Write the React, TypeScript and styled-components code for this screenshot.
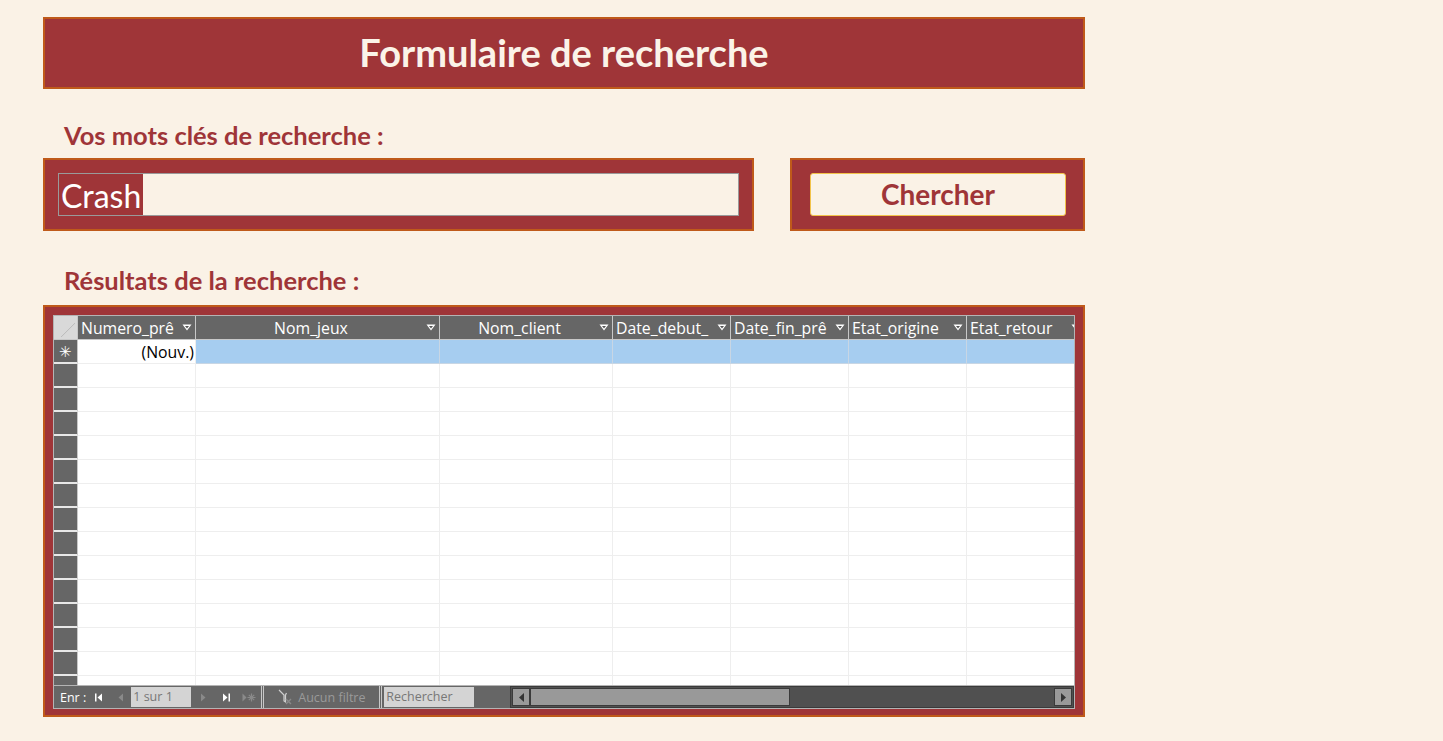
import React from 'react';
import styled, { createGlobalStyle } from 'styled-components';

const RED = '#9f3538';
const ORANGE = '#bf5a1a';
const CREAM = '#faf2e6';

const GlobalStyle = createGlobalStyle`
  html, body {
    margin: 0;
    padding: 0;
    background: ${CREAM};
  }
  body {
    font-family: Lato, 'Open Sans', sans-serif;
  }
`;

const Page = styled.div`
  width: 1042px;
  padding: 17px 0 0 43px;
  display: flex;
  flex-direction: column;
`;

const Banner = styled.div`
  height: 72px;
  box-sizing: border-box;
  background: ${RED};
  border: 2px solid ${ORANGE};
  display: flex;
  align-items: center;
  justify-content: center;
`;

const Title = styled.h1`
  margin: 0 0 3px;
  font-family: Lato, sans-serif;
  font-weight: 700;
  font-size: 38px;
  color: #fbf3e8;
`;

const Label = styled.div<{ $top: number }>`
  margin: ${(p) => p.$top}px 0 0 21px;
  height: 30px;
  line-height: 30px;
  font-family: Lato, sans-serif;
  font-weight: 700;
  font-size: 25.5px;
  color: ${RED};
`;

const SearchRow = styled.div`
  margin-top: 8px;
  display: flex;
  gap: 36px;
`;

const Panel = styled.div<{ $width: number; $pad: string }>`
  width: ${(p) => p.$width}px;
  height: 73px;
  box-sizing: border-box;
  background: ${RED};
  border: 2px solid ${ORANGE};
  padding: ${(p) => p.$pad};
  display: flex;
  align-items: center;
`;

const Field = styled.div`
  flex: 1;
  height: 43px;
  box-sizing: border-box;
  border: 1px solid #9a9a9a;
  background: ${CREAM};
  display: flex;
  align-items: stretch;
`;

const Selected = styled.span`
  background: ${RED};
  color: #ffffff;
  font-family: Lato, 'Open Sans', sans-serif;
  font-size: 32px;
  line-height: 43px;
  padding: 0 2px 0 2px;
`;

const SearchButton = styled.button`
  flex: 1;
  height: 43px;
  border: 1px solid #f2c34a;
  border-radius: 3px;
  background: ${CREAM};
  color: ${RED};
  font-family: Lato, sans-serif;
  font-weight: 700;
  font-size: 28px;
  padding: 0 0 2px;
  cursor: pointer;
`;

const GridPanel = styled.div`
  margin-top: 10px;
  height: 412px;
  box-sizing: border-box;
  background: ${RED};
  border: 2px solid ${ORANGE};
  padding: 8px;
`;

const Sheet = styled.div`
  height: 394px;
  box-sizing: border-box;
  border: 1px solid #b4b4b4;
  background: #ffffff;
  display: flex;
  flex-direction: column;
  overflow: hidden;
  font-family: 'Open Sans', 'Noto Sans', sans-serif;
  font-size: 15.8px;
`;

const COLS = '24px 118px 244px 173px 118px 118px 118px 118px';

const Row = styled.div`
  display: grid;
  grid-template-columns: ${COLS};
  height: 24px;
  flex-shrink: 0;
`;

const Body = styled.div`
  flex: 1;
  overflow: hidden;
  display: flex;
  flex-direction: column;
`;

const Corner = styled.div`
  background: #d9d9d9;
  border-right: 1px solid #c8c8c8;
  border-bottom: 1px solid #c8c8c8;
  position: relative;
  &::after {
    content: '';
    position: absolute;
    right: 2px;
    bottom: 2px;
    width: 14px;
    height: 14px;
    background: linear-gradient(135deg, transparent 48%, #bdbdbd 50%, transparent 54%);
  }
`;

const HeadCell = styled.div<{ $align: 'left' | 'center' }>`
  background: #666666;
  color: #ffffff;
  border-right: 1px solid #c8c8c8;
  border-bottom: 1px solid #c8c8c8;
  display: flex;
  align-items: center;
  padding: 0 3px 0 3px;
  gap: 3px;
  overflow: hidden;
  white-space: nowrap;
  & > span {
    flex: 1;
    overflow: hidden;
    text-align: ${(p) => p.$align};
    line-height: 22px;
  }
`;

const Selector = styled.div`
  background: #666666;
  border-right: 1px solid #c8c8c8;
  border-bottom: 2px solid #e8e8e8;
  box-sizing: border-box;
  color: #ffffff;
  display: flex;
  align-items: center;
  justify-content: center;
  font-size: 15px;
`;

const Cell = styled.div<{ $fill?: string; $right?: boolean }>`
  background: ${(p) => p.$fill || '#ffffff'};
  border-right: 1px solid ${(p) => (p.$fill ? '#c8d6e4' : '#eeeeee')};
  border-bottom: 1px solid ${(p) => (p.$fill ? '#c8d6e4' : '#eeeeee')};
  color: #000000;
  display: flex;
  align-items: center;
  justify-content: ${(p) => (p.$right ? 'flex-end' : 'flex-start')};
  padding: 0 1px;
  line-height: 22px;
  white-space: nowrap;
`;

const NavBar = styled.div`
  height: 22px;
  flex-shrink: 0;
  border-top: 1px solid #b4b4b4;
  background: #666666;
  display: flex;
  align-items: center;
  font-size: 12.5px;
  color: #ffffff;
`;

const NavText = styled.span`
  margin: 0 1px 0 6px;
`;

const NavIcon = styled.span<{ $dim?: boolean; $width?: number }>`
  width: ${(p) => p.$width || 22}px;
  height: 20px;
  display: flex;
  align-items: center;
  justify-content: center;
  color: ${(p) => (p.$dim ? '#8a8a8a' : '#ffffff')};
`;

const NavBox = styled.div<{ $width: number; $left?: number }>`
  width: ${(p) => p.$width}px;
  margin-left: ${(p) => p.$left || 0}px;
  height: 20px;
  box-sizing: border-box;
  background: #d4d4d4;
  color: #777777;
  padding-left: 2px;
  line-height: 20px;
`;

const Divider = styled.div`
  width: 3px;
  height: 22px;
  border-left: 1px solid #c8c8c8;
  border-right: 1px solid #c8c8c8;
  box-sizing: border-box;
`;

const Filter = styled.div`
  width: 115px;
  display: flex;
  align-items: center;
  gap: 4px;
  color: #9a9a9a;
  padding-left: 14px;
  box-sizing: border-box;
`;

const ScrollTrack = styled.div`
  margin-left: 36px;
  flex: 1;
  height: 22px;
  box-sizing: border-box;
  background: #505050;
  border: 1px solid #3a3a3a;
  display: flex;
  align-items: center;
  padding: 0 1px;
`;

const ScrollButton = styled.div`
  width: 18px;
  height: 18px;
  box-sizing: border-box;
  background: #999999;
  border: 1px solid #3a3a3a;
  display: flex;
  align-items: center;
  justify-content: center;
`;

const Thumb = styled.div`
  width: 260px;
  height: 18px;
  box-sizing: border-box;
  background: #999999;
  border: 1px solid #3a3a3a;
`;

const Spacer = styled.div`
  flex: 1;
`;

const Arrow = () => (
  <svg width="10" height="7" viewBox="0 0 10 7" style={{ flexShrink: 0 }}>
    <path d="M0.5 0.5 H9.5 L5 6.5 Z" fill="#ffffff" />
    <path d="M3 2 H7 L5 4.6 Z" fill="#555555" />
  </svg>
);

const columns: { name: string; align: 'left' | 'center' }[] = [
  { name: 'Numero_prê', align: 'left' },
  { name: 'Nom_jeux', align: 'center' },
  { name: 'Nom_client', align: 'center' },
  { name: 'Date_debut_', align: 'left' },
  { name: 'Date_fin_prê', align: 'left' },
  { name: 'Etat_origine', align: 'left' },
  { name: 'Etat_retour', align: 'left' },
];

const emptyRows = Array.from({ length: 15 }, (_, i) => i);

function App() {
  return (
    <>
      <GlobalStyle />
      <Page>
        <Banner>
          <Title>Formulaire de recherche</Title>
        </Banner>

        <Label $top={31}>Vos mots clés de recherche :</Label>
        <SearchRow>
          <Panel $width={711} $pad="0 13px 0 13px">
            <Field>
              <Selected>Crash</Selected>
            </Field>
          </Panel>
          <Panel $width={295} $pad="0 17px 0 18px">
            <SearchButton>Chercher</SearchButton>
          </Panel>
        </SearchRow>

        <Label $top={34}>Résultats de la recherche :</Label>
        <GridPanel>
          <Sheet>
            <Row>
              <Corner />
              {columns.map((c) => (
                <HeadCell key={c.name} $align={c.align}>
                  <span>{c.name}</span>
                  <Arrow />
                </HeadCell>
              ))}
            </Row>
            <Body>
              <Row>
                <Selector>✳</Selector>
                <Cell $right>(Nouv.)</Cell>
                {columns.slice(1).map((c) => (
                  <Cell key={c.name} $fill="#a6cdf0" />
                ))}
              </Row>
              {emptyRows.map((r) => (
                <Row key={r}>
                  <Selector />
                  {columns.map((c) => (
                    <Cell key={c.name} />
                  ))}
                </Row>
              ))}
            </Body>
            <NavBar>
              <NavText>Enr :</NavText>
              <NavIcon>
                <svg width="9" height="9" viewBox="0 0 9 9">
                  <rect x="1" y="0.5" width="1.5" height="8" fill="currentColor" />
                  <path d="M8 0.5 V8.5 L3.5 4.5 Z" fill="currentColor" />
                </svg>
              </NavIcon>
              <NavIcon $dim>
                <svg width="7" height="9" viewBox="0 0 7 9">
                  <path d="M6 0.5 V8.5 L1.5 4.5 Z" fill="currentColor" />
                </svg>
              </NavIcon>
              <NavBox $width={60}>1 sur 1</NavBox>
              <NavIcon $dim $width={24}>
                <svg width="7" height="9" viewBox="0 0 7 9">
                  <path d="M1 0.5 V8.5 L5.5 4.5 Z" fill="currentColor" />
                </svg>
              </NavIcon>
              <NavIcon $width={22}>
                <svg width="9" height="9" viewBox="0 0 9 9">
                  <path d="M1 0.5 V8.5 L5.5 4.5 Z" fill="currentColor" />
                  <rect x="6.5" y="0.5" width="1.5" height="8" fill="currentColor" />
                </svg>
              </NavIcon>
              <NavIcon $dim $width={24}>
                <svg width="14" height="9" viewBox="0 0 14 9">
                  <path d="M0.5 0.5 V8.5 L4.5 4.5 Z" fill="currentColor" />
                  <path
                    d="M9.5 0.5 V8.5 M5.5 4.5 H13.5 M6.8 1.8 L12.2 7.2 M12.2 1.8 L6.8 7.2"
                    stroke="currentColor"
                    strokeWidth="1.2"
                  />
                </svg>
              </NavIcon>
              <Divider />
              <Filter>
                <svg width="16" height="16" viewBox="0 0 16 16">
                  <path d="M1 1 L6 6 V12 L7.5 13 V6 L8.5 4" fill="none" stroke="#d0d0d0" strokeWidth="1.2" />
                  <path d="M8 10 L13 15 M13 10 L8 15" stroke="#8a8a8a" strokeWidth="1.4" />
                </svg>
                Aucun filtre
              </Filter>
              <Divider />
              <NavBox $width={90} $left={2}>
                Rechercher
              </NavBox>
              <ScrollTrack>
                <ScrollButton>
                  <svg width="5" height="9" viewBox="0 0 5 9">
                    <path d="M5 0 V9 L0 4.5 Z" fill="#333333" />
                  </svg>
                </ScrollButton>
                <Thumb />
                <Spacer />
                <ScrollButton>
                  <svg width="5" height="9" viewBox="0 0 5 9">
                    <path d="M0 0 V9 L5 4.5 Z" fill="#333333" />
                  </svg>
                </ScrollButton>
              </ScrollTrack>
            </NavBar>
          </Sheet>
        </GridPanel>
      </Page>
    </>
  );
}

export default App;
